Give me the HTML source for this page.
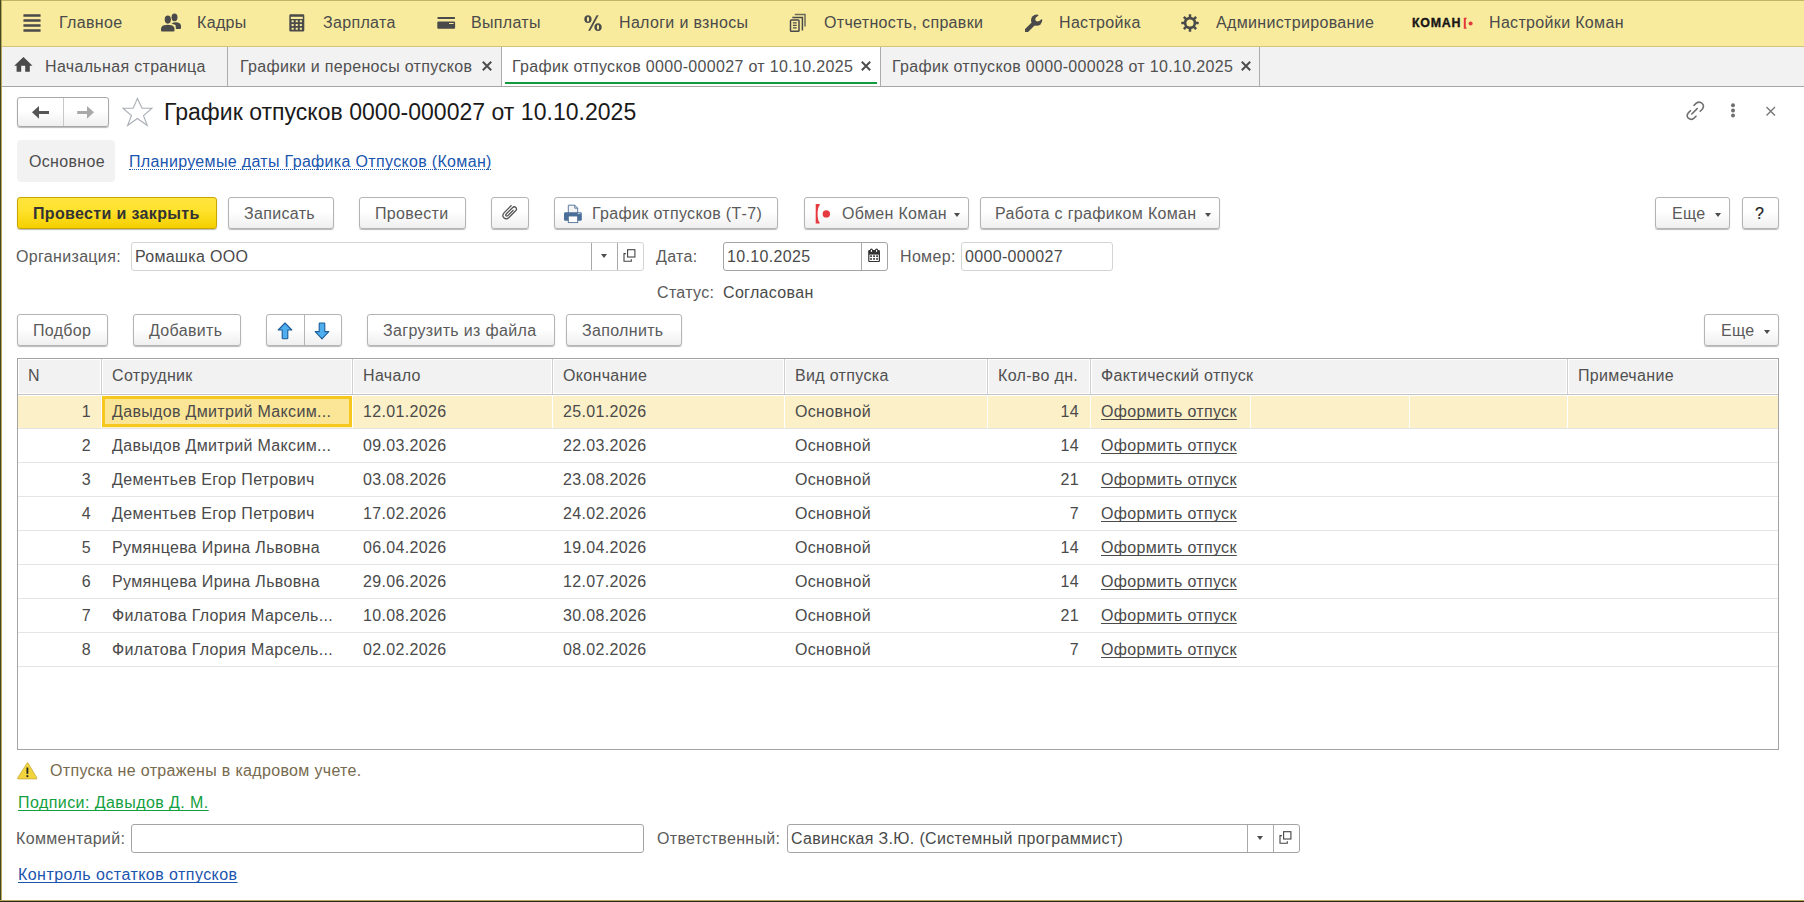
<!DOCTYPE html>
<html><head><meta charset="utf-8">
<style>
*{box-sizing:border-box;margin:0;padding:0}
html,body{width:1804px;height:902px;overflow:hidden;background:#fff}
body{position:relative;font-family:"Liberation Sans",sans-serif;font-size:16px;color:#5a5a5a;letter-spacing:0.33px}
.a{position:absolute}
.t{position:absolute;white-space:nowrap;line-height:18px;font-size:16px}
.r{text-align:right}
.btn{position:absolute;border:1px solid #B4B4B4;border-radius:3px;background:linear-gradient(#FFFFFF 0%,#FFFFFF 45%,#EFEFEF 100%);box-shadow:0 1px 1px rgba(0,0,0,0.28);height:32px}
.inp{position:absolute;border:1px solid #C4C4C4;border-radius:3px;background:#fff;height:29px}
.vsep{position:absolute;width:1px;background:#B4B4B4}
.dd{position:absolute;width:0;height:0;border-left:3px solid transparent;border-right:3px solid transparent;border-top:4px solid #4d4d4d}
.lnk{color:#1F5EB5}
.ul{text-decoration:underline;text-underline-offset:2px;text-decoration-skip-ink:none}
svg{position:absolute;overflow:visible}
</style></head><body>
<div class="a" style="left:0;top:0;width:1804px;height:47px;background:#F8EB9D;border-top:1px solid #C3B566;border-bottom:1px solid #D4C27A"></div>
<svg style="left:23px;top:14px" width="18" height="18" viewBox="0 0 18 18"><g fill="#4a4a4a"><rect x="0.4" y="0.2" width="17.2" height="2.5" rx="0.5"/><rect x="0.4" y="5.2" width="17.2" height="2.5" rx="0.5"/><rect x="0.4" y="10.2" width="17.2" height="2.5" rx="0.5"/><rect x="0.4" y="15.2" width="17.2" height="2.5" rx="0.5"/></g></svg>
<svg style="left:160px;top:12px" width="22" height="21" viewBox="0 0 22 21"><g fill="#4a4a4a"><ellipse cx="14.5" cy="5.3" rx="3" ry="3.9"/><path d="M11.5 11.5 Q14.5 9.5 18 10.5 Q21 11.3 21 13.5 L21 16.2 Q21 17 20 17 L16 17 L15.5 13 Z"/><ellipse cx="7.8" cy="7.6" rx="3.1" ry="4.1"/><path d="M1 17 Q1 14.2 4 13.3 Q7.8 12.2 11.5 13.3 Q14.5 14.2 14.5 17 L14.5 18.6 Q14.5 19.6 13.5 19.6 L2 19.6 Q1 19.6 1 18.6 Z"/></g></svg>
<svg style="left:289px;top:14px" width="16" height="18" viewBox="0 0 16 18"><path fill="#4a4a4a" fill-rule="evenodd" d="M1.5 0.3 H14 Q15.3 0.3 15.3 1.6 V16.3 Q15.3 17.6 14 17.6 H1.5 Q0.3 17.6 0.3 16.3 V1.6 Q0.3 0.3 1.5 0.3 Z M1.8 2.8 V4.9 H13.8 V2.8 Z M2.6 6.3 V8.2 H4.7 V6.3 Z M6.7 6.3 V8.2 H8.8 V6.3 Z M10.8 6.3 V8.2 H12.9 V6.3 Z M2.6 10 V11.9 H4.7 V10 Z M6.7 10 V11.9 H8.8 V10 Z M10.8 10 V11.9 H12.9 V10 Z M2.6 13.8 V15.7 H4.7 V13.8 Z M6.7 13.8 V15.7 H8.8 V13.8 Z M10.8 13.8 V15.7 H12.9 V13.8 Z"/></svg>
<svg style="left:437px;top:16px" width="19" height="14" viewBox="0 0 19 14"><g fill="#4a4a4a"><rect x="0.3" y="0.9" width="17.8" height="2" rx="1"/><path fill-rule="evenodd" d="M1.3 5.6 H17.1 Q18.1 5.6 18.1 6.6 V11.8 Q18.1 12.8 17.1 12.8 H1.3 Q0.3 12.8 0.3 11.8 V6.6 Q0.3 5.6 1.3 5.6 Z M12.2 7 Q11.6 7.5 12.2 8 H16.5 Q17 7.5 16.5 7 Z"/></g></svg>
<svg style="left:583px;top:14px" width="20" height="18" viewBox="0 0 20 18"><g fill="#4a4a4a"><path fill-rule="evenodd" d="M5 1.3 C7.4 1.3 8.6 3 8.6 5.2 C8.6 7.4 7.4 9.1 5 9.1 C2.6 9.1 1.3 7.4 1.3 5.2 C1.3 3 2.6 1.3 5 1.3 Z M5 2.7 C4.2 2.7 3.9 3.7 3.9 5.2 C3.9 6.7 4.2 7.7 5 7.7 C5.8 7.7 6.1 6.7 6.1 5.2 C6.1 3.7 5.8 2.7 5 2.7 Z"/><path fill-rule="evenodd" d="M15 9.3 C17.4 9.3 18.7 11 18.7 13.2 C18.7 15.4 17.4 17.1 15 17.1 C12.6 17.1 11.4 15.4 11.4 13.2 C11.4 11 12.6 9.3 15 9.3 Z M15 10.7 C14.2 10.7 13.9 11.7 13.9 13.2 C13.9 14.7 14.2 15.7 15 15.7 C15.8 15.7 16.1 14.7 16.1 13.2 C16.1 11.7 15.8 10.7 15 10.7 Z"/><path d="M13.6 1.3 H15.6 L7.2 16.8 H5.2 Z"/></g></svg>
<svg style="left:789px;top:13px" width="18" height="20" viewBox="0 0 18 20"><g fill="none" stroke="#4a4a4a" stroke-width="1.5"><path d="M5.8 1.6 H16 V13.5" opacity="0.8"/><path d="M3.3 4.4 H13.4 V17.4"/><rect x="1.5" y="6.9" width="8.5" height="11.4" rx="0.8"/><path d="M3.9 9.9 H7.7 M3.9 12.3 H7.7 M3.9 14.8 H7.7" stroke-width="1.2"/></g></svg>
<svg style="left:1024px;top:13px" width="20" height="20" viewBox="0 0 20 20"><defs><mask id="wm"><rect x="-5" y="-5" width="30" height="30" fill="#fff"/><circle cx="13.6" cy="6.3" r="2.3" fill="#000"/><path d="M12 4.7 L17 -0.3 L21 3.7 L15.2 8 Z" fill="#000"/></mask></defs><g mask="url(#wm)" fill="#4a4a4a"><circle cx="12.6" cy="7.2" r="5.6"/><path d="M2.6 17.4 L10.6 9.4" stroke="#4a4a4a" stroke-width="4.2" stroke-linecap="round"/></g></svg>
<svg style="left:1181px;top:14px" width="18" height="18" viewBox="0 0 18 18"><circle cx="9" cy="9" r="4.9" fill="none" stroke="#4a4a4a" stroke-width="2.6"/><g stroke="#4a4a4a" stroke-width="2.5"><line x1="14.20" y1="9.00" x2="17.70" y2="9.00"/><line x1="12.68" y1="12.68" x2="15.15" y2="15.15"/><line x1="9.00" y1="14.20" x2="9.00" y2="17.70"/><line x1="5.32" y1="12.68" x2="2.85" y2="15.15"/><line x1="3.80" y1="9.00" x2="0.30" y2="9.00"/><line x1="5.32" y1="5.32" x2="2.85" y2="2.85"/><line x1="9.00" y1="3.80" x2="9.00" y2="0.30"/><line x1="12.68" y1="5.32" x2="15.15" y2="2.85"/></g></svg>
<div class="t" style="left:1412px;top:14px;font-size:12.4px;font-weight:bold;color:#161616;letter-spacing:0.75px;line-height:18px;-webkit-text-stroke:0.35px #161616">КОМАН</div>
<svg style="left:1462px;top:17px" width="14" height="13" viewBox="0 0 14 13"><path d="M1.8 0.8 H4.6 V2 H3.8 V10.6 H4.6 V11.8 H1.8 Z" fill="#E3383D"/><circle cx="8.6" cy="6.4" r="2" fill="#E3383D"/></svg>
<div class="t" style="left:59px;top:14px;color:#4a4a4a">Главное</div>
<div class="t" style="left:197px;top:14px;color:#4a4a4a">Кадры</div>
<div class="t" style="left:323px;top:14px;color:#4a4a4a">Зарплата</div>
<div class="t" style="left:471px;top:14px;color:#4a4a4a">Выплаты</div>
<div class="t" style="left:619px;top:14px;color:#4a4a4a">Налоги и взносы</div>
<div class="t" style="left:824px;top:14px;color:#4a4a4a">Отчетность, справки</div>
<div class="t" style="left:1059px;top:14px;color:#4a4a4a">Настройка</div>
<div class="t" style="left:1216px;top:14px;color:#4a4a4a">Администрирование</div>
<div class="t" style="left:1489px;top:14px;color:#4a4a4a">Настройки Коман</div>
<div class="a" style="left:0;top:47px;width:1804px;height:40px;background:#F2F2F2;border-bottom:1px solid #A6A6A6"></div>
<div class="a" style="left:502px;top:47px;width:378px;height:39px;background:#fff"></div>
<div class="a" style="left:505px;top:82px;width:372px;height:2px;background:#119A3E"></div>
<div class="vsep" style="left:227px;top:47px;height:39px;background:#ACACAC"></div>
<div class="vsep" style="left:501px;top:47px;height:39px;background:#ACACAC"></div>
<div class="vsep" style="left:880px;top:47px;height:39px;background:#ACACAC"></div>
<div class="vsep" style="left:1259px;top:47px;height:39px;background:#ACACAC"></div>
<svg style="left:13px;top:56px" width="20" height="17" viewBox="0 0 20 17"><path fill="#4a4a4a" d="M10.5 1 L19.5 9.7 H16.8 V15.7 H12.2 V9.7 H8.2 V15.7 H3.6 V9.7 H1.2 Z"/></svg>
<div class="t" style="left:45px;top:58px;color:#505050">Начальная страница</div>
<div class="t" style="left:240px;top:58px;color:#505050">Графики и переносы отпусков</div>
<div class="t" style="left:512px;top:58px;color:#505050">График отпусков 0000-000027 от 10.10.2025</div>
<div class="t" style="left:892px;top:58px;color:#505050">График отпусков 0000-000028 от 10.10.2025</div>
<svg style="left:482px;top:61px" width="10" height="10" viewBox="0 0 10 10"><path d="M0.8 0.8 L9.2 9.2 M9.2 0.8 L0.8 9.2" stroke="#4d4d4d" stroke-width="2"/></svg>
<svg style="left:861px;top:61px" width="10" height="10" viewBox="0 0 10 10"><path d="M0.8 0.8 L9.2 9.2 M9.2 0.8 L0.8 9.2" stroke="#4d4d4d" stroke-width="2"/></svg>
<svg style="left:1241px;top:61px" width="10" height="10" viewBox="0 0 10 10"><path d="M0.8 0.8 L9.2 9.2 M9.2 0.8 L0.8 9.2" stroke="#4d4d4d" stroke-width="2"/></svg>
<div class="btn" style="left:17px;top:97px;width:92px;height:30px;border-color:#A8A8A8"></div>
<div class="vsep" style="left:63px;top:98px;height:28px;background:#C8C8C8"></div>
<svg style="left:31px;top:105px" width="19" height="15" viewBox="0 0 19 15"><path fill="#555" d="M1 7.3 L8 0.9 V5.9 H18 V8.9 H8 V13.7 Z"/></svg>
<svg style="left:76px;top:105px" width="19" height="15" viewBox="0 0 19 15"><path fill="#A9A9A9" d="M18 7.3 L11 0.9 V5.9 H1.2 V8.9 H11 V13.7 Z"/></svg>
<svg style="left:122px;top:97px" width="31" height="30" viewBox="0 0 31 30"><path fill="none" stroke="#A9AEB5" stroke-width="1.1" stroke-linejoin="miter" d="M15.4 1.4 L11.2 11.2 H1 L9.4 18.6 L5.6 28.5 L15.4 21.5 L25.3 28.5 L21.5 18.6 L29.9 11.2 H20 Z"/></svg>
<div class="t" style="left:164px;top:99px;font-size:23px;line-height:26px;color:#1a1a1a;letter-spacing:0.03px">График отпусков 0000-000027 от 10.10.2025</div>
<svg style="left:1685px;top:101px" width="22" height="20" viewBox="0 0 22 20"><g fill="none" stroke="#707070" stroke-width="1.6" stroke-linecap="round"><path d="M9 4.3 L11.5 2 Q14.5 0 17.2 2.5 Q19.6 5.2 17.4 8 L15.2 10.2"/><path d="M12.2 7.6 L6.8 13"/><path d="M5.4 9.7 L3.3 11.9 Q1 14.6 3.4 17.2 Q6 19.5 8.8 17.4 L11 15.2"/></g></svg>
<svg style="left:1728px;top:101px" width="10" height="18" viewBox="0 0 10 18"><g fill="#707070"><circle cx="5" cy="4.3" r="2"/><circle cx="5" cy="9.5" r="2"/><circle cx="5" cy="14.5" r="2"/></g></svg>
<svg style="left:1765px;top:106px" width="12" height="11" viewBox="0 0 12 11"><path d="M1.5 1 L10 9.6 M10 1 L1.5 9.6" stroke="#777" stroke-width="1.4"/></svg>
<div class="a" style="left:17px;top:140px;width:98px;height:42px;background:#F2F2F2;border-radius:4px"></div>
<div class="t" style="left:29px;top:153px;color:#4d4d4d">Основное</div>
<div class="t lnk" style="left:129px;top:153px;color:#1A55AE">Планируемые даты Графика Отпусков (Коман)</div>
<div class="a" style="left:129px;top:169px;width:362px;height:1px;border-top:1px dotted #1A55AE"></div>
<div class="btn" style="left:17px;top:197px;width:200px;background:linear-gradient(#FFE43D 0%,#FFE22E 40%,#F4CF00 100%);border-color:#C7A600"></div>
<div class="t" style="left:33px;top:205px;font-weight:bold;color:#333;letter-spacing:0.35px">Провести и закрыть</div>
<div class="btn" style="left:228px;top:197px;width:106px;"></div>
<div class="t" style="left:244px;top:205px;">Записать</div>
<div class="btn" style="left:359px;top:197px;width:107px;"></div>
<div class="t" style="left:375px;top:205px;">Провести</div>
<div class="btn" style="left:491px;top:197px;width:38px;"></div>
<svg style="left:500px;top:203px" width="20" height="20" viewBox="0 0 20 20"><path fill="none" stroke="#555" stroke-width="1.3" d="M11.5 2.3 L4.2 9.6 Q1.6 12.4 3.9 14.8 Q6.3 17 9 14.5 L15.6 7.8 Q17.3 5.9 15.8 4.4 Q14.3 3 12.5 4.7 L6.2 11 Q5.3 12 6.1 12.8 Q6.9 13.5 7.9 12.6 L13.5 7"/></svg>
<div class="btn" style="left:554px;top:197px;width:224px;"></div>
<div class="t" style="left:592px;top:205px;">График отпусков (Т-7)</div>
<svg style="left:563px;top:204px" width="20" height="20" viewBox="0 0 20 20"><path d="M5.3 9 V1.2 H11.8 L14.7 4.2 V9" fill="#F4F4F4" stroke="#4D6F96" stroke-width="0.9"/><path d="M11.8 1.2 V4.2 H14.7" fill="none" stroke="#4D6F96" stroke-width="0.9"/><rect x="1" y="8.2" width="17.8" height="8.6" rx="1.4" fill="#4A6E98"/><rect x="5.3" y="12" width="9.4" height="6.6" fill="#fff" stroke="#4D6F96" stroke-width="0.9"/><circle cx="15.3" cy="9.6" r="0.55" fill="#fff"/><circle cx="16.9" cy="9.6" r="0.55" fill="#fff"/></svg>
<div class="btn" style="left:804px;top:197px;width:165px;"></div>
<div class="t" style="left:842px;top:205px;">Обмен Коман</div>
<svg style="left:814px;top:203px" width="18" height="22" viewBox="0 0 18 22"><path d="M1.7 1.1 H5.5 L5.8 2.2 Q3.6 4.2 3.6 11 Q3.6 17.8 5.8 19.8 L5.5 20.6 H1.7 Z" fill="#E53A40"/><circle cx="12.3" cy="10.9" r="3.7" fill="#E53A40"/></svg>
<div class="dd" style="left:954px;top:213px"></div>
<div class="btn" style="left:980px;top:197px;width:240px;"></div>
<div class="t" style="left:995px;top:205px;">Работа с графиком Коман</div>
<div class="dd" style="left:1205px;top:213px"></div>
<div class="btn" style="left:1655px;top:197px;width:75px;"></div>
<div class="t" style="left:1672px;top:205px;">Еще</div>
<div class="dd" style="left:1715px;top:213px"></div>
<div class="btn" style="left:1742px;top:197px;width:37px;"></div>
<div class="t" style="left:1755px;top:205px;color:#222;-webkit-text-stroke:0.2px #222">?</div>
<div class="t" style="left:16px;top:248px">Организация:</div>
<div class="inp" style="left:131px;top:242px;width:513px;border-color:#D4D4D4"></div>
<div class="vsep" style="left:591px;top:243px;height:27px;background:#A9A9A9"></div>
<div class="vsep" style="left:617px;top:243px;height:27px;background:#A9A9A9"></div>
<div class="t" style="left:135px;top:248px;color:#4a4a4a">Ромашка ООО</div>
<div class="dd" style="left:601px;top:254px"></div>
<svg style="left:623px;top:249px" width="14" height="14" viewBox="0 0 14 14"><g fill="none" stroke="#444" stroke-width="1.1"><rect x="4.6" y="0.7" width="7.3" height="7.3"/><path d="M2.9 4.6 H1 V12.3 H8.3 V10.2"/></g></svg>
<div class="t" style="left:656px;top:248px">Дата:</div>
<div class="inp" style="left:723px;top:242px;width:165px;border-color:#A4A4A4"></div>
<div class="vsep" style="left:861px;top:243px;height:27px;background:#A9A9A9"></div>
<div class="t" style="left:727px;top:248px;color:#4a4a4a">10.10.2025</div>
<svg style="left:867px;top:248px" width="14" height="15" viewBox="0 0 14 15"><rect x="1.2" y="2" width="11.8" height="12" rx="1.2" fill="#333"/><rect x="2.4" y="6.6" width="9.4" height="6.4" fill="#fff"/><g fill="#333"><rect x="3.2" y="7.3" width="1.7" height="1.7"/><rect x="6.2" y="7.3" width="1.7" height="1.7"/><rect x="9.2" y="7.3" width="1.7" height="1.7"/><rect x="3.2" y="10.1" width="1.7" height="1.7"/><rect x="6.2" y="10.1" width="1.7" height="1.7"/><rect x="9.2" y="10.1" width="1.7" height="1.7"/><ellipse cx="4.4" cy="2.4" rx="1.6" ry="2"/><ellipse cx="9.6" cy="2.4" rx="1.6" ry="2"/></g><ellipse cx="4.4" cy="2.9" rx="0.65" ry="1.1" fill="#fff"/><ellipse cx="9.6" cy="2.9" rx="0.65" ry="1.1" fill="#fff"/></svg>
<div class="t" style="left:900px;top:248px">Номер:</div>
<div class="inp" style="left:961px;top:242px;width:152px;border-color:#D4D4D4"></div>
<div class="t" style="left:965px;top:248px;color:#4a4a4a">0000-000027</div>
<div class="t" style="left:657px;top:284px">Статус:</div>
<div class="t" style="left:723px;top:284px;color:#4a4a4a">Согласован</div>
<div class="btn" style="left:17px;top:314px;width:91px;"></div>
<div class="t" style="left:33px;top:322px;">Подбор</div>
<div class="btn" style="left:133px;top:314px;width:108px;"></div>
<div class="t" style="left:149px;top:322px;">Добавить</div>
<div class="btn" style="left:266px;top:314px;width:76px;"></div>
<div class="vsep" style="left:304px;top:315px;height:30px;background:#B4B4B4"></div>
<svg style="left:277px;top:322px" width="16" height="18" viewBox="0 0 16 18"><path d="M8 1 L14.8 8 H10.8 V16 Q10.8 16.8 10 16.8 H6 Q5.2 16.8 5.2 16 V8 H1.2 Z" fill="#4EAEEE" stroke="#1B5C99" stroke-width="1.1" stroke-linejoin="round"/></svg>
<svg style="left:314px;top:322px" width="16" height="18" viewBox="0 0 16 18"><path d="M8 16.8 L14.8 9.6 H10.8 V1.8 Q10.8 1 10 1 H6 Q5.2 1 5.2 1.8 V9.6 H1.2 Z" fill="#4EAEEE" stroke="#1B5C99" stroke-width="1.1" stroke-linejoin="round"/></svg>
<div class="btn" style="left:367px;top:314px;width:188px;"></div>
<div class="t" style="left:383px;top:322px;">Загрузить из файла</div>
<div class="btn" style="left:566px;top:314px;width:116px;"></div>
<div class="t" style="left:582px;top:322px;">Заполнить</div>
<div class="btn" style="left:1704px;top:314px;width:75px;"></div>
<div class="t" style="left:1721px;top:322px;">Еще</div>
<div class="dd" style="left:1764px;top:330px"></div>
<div class="a" style="left:17px;top:358px;width:1762px;height:392px;border:1px solid #A4A4A4;background:#fff"></div>
<div class="a" style="left:18px;top:359px;width:1760px;height:35px;background:#fff"></div>
<div class="a" style="left:19px;top:360px;width:81px;height:33px;background:#F2F2F2"></div>
<div class="a" style="left:103px;top:360px;width:248px;height:33px;background:#F2F2F2"></div>
<div class="a" style="left:354px;top:360px;width:197px;height:33px;background:#F2F2F2"></div>
<div class="a" style="left:554px;top:360px;width:229px;height:33px;background:#F2F2F2"></div>
<div class="a" style="left:786px;top:360px;width:200px;height:33px;background:#F2F2F2"></div>
<div class="a" style="left:989px;top:360px;width:100px;height:33px;background:#F2F2F2"></div>
<div class="a" style="left:1092px;top:360px;width:474px;height:33px;background:#F2F2F2"></div>
<div class="a" style="left:1569px;top:360px;width:208px;height:33px;background:#F2F2F2"></div>
<div class="vsep" style="left:101px;top:359px;height:35px;background:#CFCFCF"></div>
<div class="vsep" style="left:352px;top:359px;height:35px;background:#CFCFCF"></div>
<div class="vsep" style="left:552px;top:359px;height:35px;background:#CFCFCF"></div>
<div class="vsep" style="left:784px;top:359px;height:35px;background:#CFCFCF"></div>
<div class="vsep" style="left:987px;top:359px;height:35px;background:#CFCFCF"></div>
<div class="vsep" style="left:1090px;top:359px;height:35px;background:#CFCFCF"></div>
<div class="vsep" style="left:1567px;top:359px;height:35px;background:#CFCFCF"></div>
<div class="a" style="left:18px;top:394px;width:1760px;height:1px;background:#C4C4C4"></div>
<div class="t" style="left:28px;top:367px;color:#505050">N</div>
<div class="t" style="left:112px;top:367px;color:#505050">Сотрудник</div>
<div class="t" style="left:363px;top:367px;color:#505050">Начало</div>
<div class="t" style="left:563px;top:367px;color:#505050">Окончание</div>
<div class="t" style="left:795px;top:367px;color:#505050">Вид отпуска</div>
<div class="t" style="left:998px;top:367px;color:#505050">Кол-во дн.</div>
<div class="t" style="left:1101px;top:367px;color:#505050">Фактический отпуск</div>
<div class="t" style="left:1578px;top:367px;color:#505050">Примечание</div>
<div class="a" style="left:18px;top:396px;width:1760px;height:32px;background:#FBF0C8"></div>
<div class="a" style="left:101px;top:396px;width:1px;height:32px;background:#fff"></div>
<div class="a" style="left:352px;top:396px;width:1px;height:32px;background:#fff"></div>
<div class="a" style="left:552px;top:396px;width:1px;height:32px;background:#fff"></div>
<div class="a" style="left:784px;top:396px;width:1px;height:32px;background:#fff"></div>
<div class="a" style="left:987px;top:396px;width:1px;height:32px;background:#fff"></div>
<div class="a" style="left:1090px;top:396px;width:1px;height:32px;background:#fff"></div>
<div class="a" style="left:1567px;top:396px;width:1px;height:32px;background:#fff"></div>
<div class="a" style="left:1250px;top:396px;width:1px;height:32px;background:#fff"></div>
<div class="a" style="left:1409px;top:396px;width:1px;height:32px;background:#fff"></div>
<div class="a" style="left:102px;top:396px;width:250px;height:31px;background:#FBE597;border:3px solid #F6C81E"></div>
<div class="a" style="left:18px;top:428px;width:1760px;height:1px;background:#E4E4E4"></div>
<div class="t r" style="left:40px;width:51px;top:403px;color:#4a4a4a">1</div>
<div class="t" style="left:112px;top:403px;color:#4a4a4a">Давыдов Дмитрий Максим...</div>
<div class="t" style="left:363px;top:403px;color:#4a4a4a">12.01.2026</div>
<div class="t" style="left:563px;top:403px;color:#4a4a4a">25.01.2026</div>
<div class="t" style="left:795px;top:403px;color:#4a4a4a">Основной</div>
<div class="t r" style="left:999px;width:80px;top:403px;color:#4a4a4a">14</div>
<div class="t ul" style="left:1101px;top:403px;color:#4a4a4a">Оформить отпуск</div>
<div class="a" style="left:18px;top:462px;width:1760px;height:1px;background:#E4E4E4"></div>
<div class="t r" style="left:40px;width:51px;top:437px;color:#4a4a4a">2</div>
<div class="t" style="left:112px;top:437px;color:#4a4a4a">Давыдов Дмитрий Максим...</div>
<div class="t" style="left:363px;top:437px;color:#4a4a4a">09.03.2026</div>
<div class="t" style="left:563px;top:437px;color:#4a4a4a">22.03.2026</div>
<div class="t" style="left:795px;top:437px;color:#4a4a4a">Основной</div>
<div class="t r" style="left:999px;width:80px;top:437px;color:#4a4a4a">14</div>
<div class="t ul" style="left:1101px;top:437px;color:#4a4a4a">Оформить отпуск</div>
<div class="a" style="left:18px;top:496px;width:1760px;height:1px;background:#E4E4E4"></div>
<div class="t r" style="left:40px;width:51px;top:471px;color:#4a4a4a">3</div>
<div class="t" style="left:112px;top:471px;color:#4a4a4a">Дементьев Егор Петрович</div>
<div class="t" style="left:363px;top:471px;color:#4a4a4a">03.08.2026</div>
<div class="t" style="left:563px;top:471px;color:#4a4a4a">23.08.2026</div>
<div class="t" style="left:795px;top:471px;color:#4a4a4a">Основной</div>
<div class="t r" style="left:999px;width:80px;top:471px;color:#4a4a4a">21</div>
<div class="t ul" style="left:1101px;top:471px;color:#4a4a4a">Оформить отпуск</div>
<div class="a" style="left:18px;top:530px;width:1760px;height:1px;background:#E4E4E4"></div>
<div class="t r" style="left:40px;width:51px;top:505px;color:#4a4a4a">4</div>
<div class="t" style="left:112px;top:505px;color:#4a4a4a">Дементьев Егор Петрович</div>
<div class="t" style="left:363px;top:505px;color:#4a4a4a">17.02.2026</div>
<div class="t" style="left:563px;top:505px;color:#4a4a4a">24.02.2026</div>
<div class="t" style="left:795px;top:505px;color:#4a4a4a">Основной</div>
<div class="t r" style="left:999px;width:80px;top:505px;color:#4a4a4a">7</div>
<div class="t ul" style="left:1101px;top:505px;color:#4a4a4a">Оформить отпуск</div>
<div class="a" style="left:18px;top:564px;width:1760px;height:1px;background:#E4E4E4"></div>
<div class="t r" style="left:40px;width:51px;top:539px;color:#4a4a4a">5</div>
<div class="t" style="left:112px;top:539px;color:#4a4a4a">Румянцева Ирина Львовна</div>
<div class="t" style="left:363px;top:539px;color:#4a4a4a">06.04.2026</div>
<div class="t" style="left:563px;top:539px;color:#4a4a4a">19.04.2026</div>
<div class="t" style="left:795px;top:539px;color:#4a4a4a">Основной</div>
<div class="t r" style="left:999px;width:80px;top:539px;color:#4a4a4a">14</div>
<div class="t ul" style="left:1101px;top:539px;color:#4a4a4a">Оформить отпуск</div>
<div class="a" style="left:18px;top:598px;width:1760px;height:1px;background:#E4E4E4"></div>
<div class="t r" style="left:40px;width:51px;top:573px;color:#4a4a4a">6</div>
<div class="t" style="left:112px;top:573px;color:#4a4a4a">Румянцева Ирина Львовна</div>
<div class="t" style="left:363px;top:573px;color:#4a4a4a">29.06.2026</div>
<div class="t" style="left:563px;top:573px;color:#4a4a4a">12.07.2026</div>
<div class="t" style="left:795px;top:573px;color:#4a4a4a">Основной</div>
<div class="t r" style="left:999px;width:80px;top:573px;color:#4a4a4a">14</div>
<div class="t ul" style="left:1101px;top:573px;color:#4a4a4a">Оформить отпуск</div>
<div class="a" style="left:18px;top:632px;width:1760px;height:1px;background:#E4E4E4"></div>
<div class="t r" style="left:40px;width:51px;top:607px;color:#4a4a4a">7</div>
<div class="t" style="left:112px;top:607px;color:#4a4a4a">Филатова Глория Марсель...</div>
<div class="t" style="left:363px;top:607px;color:#4a4a4a">10.08.2026</div>
<div class="t" style="left:563px;top:607px;color:#4a4a4a">30.08.2026</div>
<div class="t" style="left:795px;top:607px;color:#4a4a4a">Основной</div>
<div class="t r" style="left:999px;width:80px;top:607px;color:#4a4a4a">21</div>
<div class="t ul" style="left:1101px;top:607px;color:#4a4a4a">Оформить отпуск</div>
<div class="a" style="left:18px;top:666px;width:1760px;height:1px;background:#E4E4E4"></div>
<div class="t r" style="left:40px;width:51px;top:641px;color:#4a4a4a">8</div>
<div class="t" style="left:112px;top:641px;color:#4a4a4a">Филатова Глория Марсель...</div>
<div class="t" style="left:363px;top:641px;color:#4a4a4a">02.02.2026</div>
<div class="t" style="left:563px;top:641px;color:#4a4a4a">08.02.2026</div>
<div class="t" style="left:795px;top:641px;color:#4a4a4a">Основной</div>
<div class="t r" style="left:999px;width:80px;top:641px;color:#4a4a4a">7</div>
<div class="t ul" style="left:1101px;top:641px;color:#4a4a4a">Оформить отпуск</div>
<svg style="left:17px;top:762px" width="21" height="18" viewBox="0 0 21 18"><path d="M10.2 0.9 Q10.6 0.5 11 0.9 L19.9 16 Q20.2 16.8 19.4 16.9 H1.1 Q0.3 16.8 0.6 16 Z" fill="#F2D43C" stroke="#C9A93A" stroke-width="0.8"/><rect x="9.5" y="5.5" width="1.8" height="6.3" fill="#222"/><rect x="9.5" y="13.2" width="1.8" height="1.9" fill="#222"/></svg>
<div class="t" style="left:50px;top:762px;color:#776A4E">Отпуска не отражены в кадровом учете.</div>
<div class="t ul" style="left:18px;top:794px;color:#12A040;letter-spacing:0.43px">Подписи: Давыдов Д. М.</div>
<div class="t" style="left:16px;top:830px">Комментарий:</div>
<div class="inp" style="left:131px;top:824px;width:513px;border-color:#A4A4A4"></div>
<div class="t" style="left:657px;top:830px">Ответственный:</div>
<div class="inp" style="left:787px;top:824px;width:513px;border-color:#A4A4A4"></div>
<div class="vsep" style="left:1247px;top:825px;height:27px;background:#A9A9A9"></div>
<div class="vsep" style="left:1273px;top:825px;height:27px;background:#A9A9A9"></div>
<div class="dd" style="left:1257px;top:836px"></div>
<svg style="left:1279px;top:831px" width="14" height="14" viewBox="0 0 14 14"><g fill="none" stroke="#444" stroke-width="1.1"><rect x="4.6" y="0.7" width="7.3" height="7.3"/><path d="M2.9 4.6 H1 V12.3 H8.3 V10.2"/></g></svg>
<div class="t" style="left:791px;top:830px;color:#4a4a4a">Савинская З.Ю. (Системный программист)</div>
<div class="t lnk ul" style="left:18px;top:866px;letter-spacing:0.45px;color:#1A55AE">Контроль остатков отпусков</div>
<div class="a" style="left:0;top:0;width:1px;height:902px;background:#414820"></div>
<div class="a" style="left:1px;top:0;width:1px;height:902px;background:#B9A95E"></div>
<div class="a" style="left:0;top:900px;width:1804px;height:1px;background:#B9A95E"></div>
<div class="a" style="left:0;top:901px;width:1804px;height:1px;background:#2a2915"></div>
</body></html>
